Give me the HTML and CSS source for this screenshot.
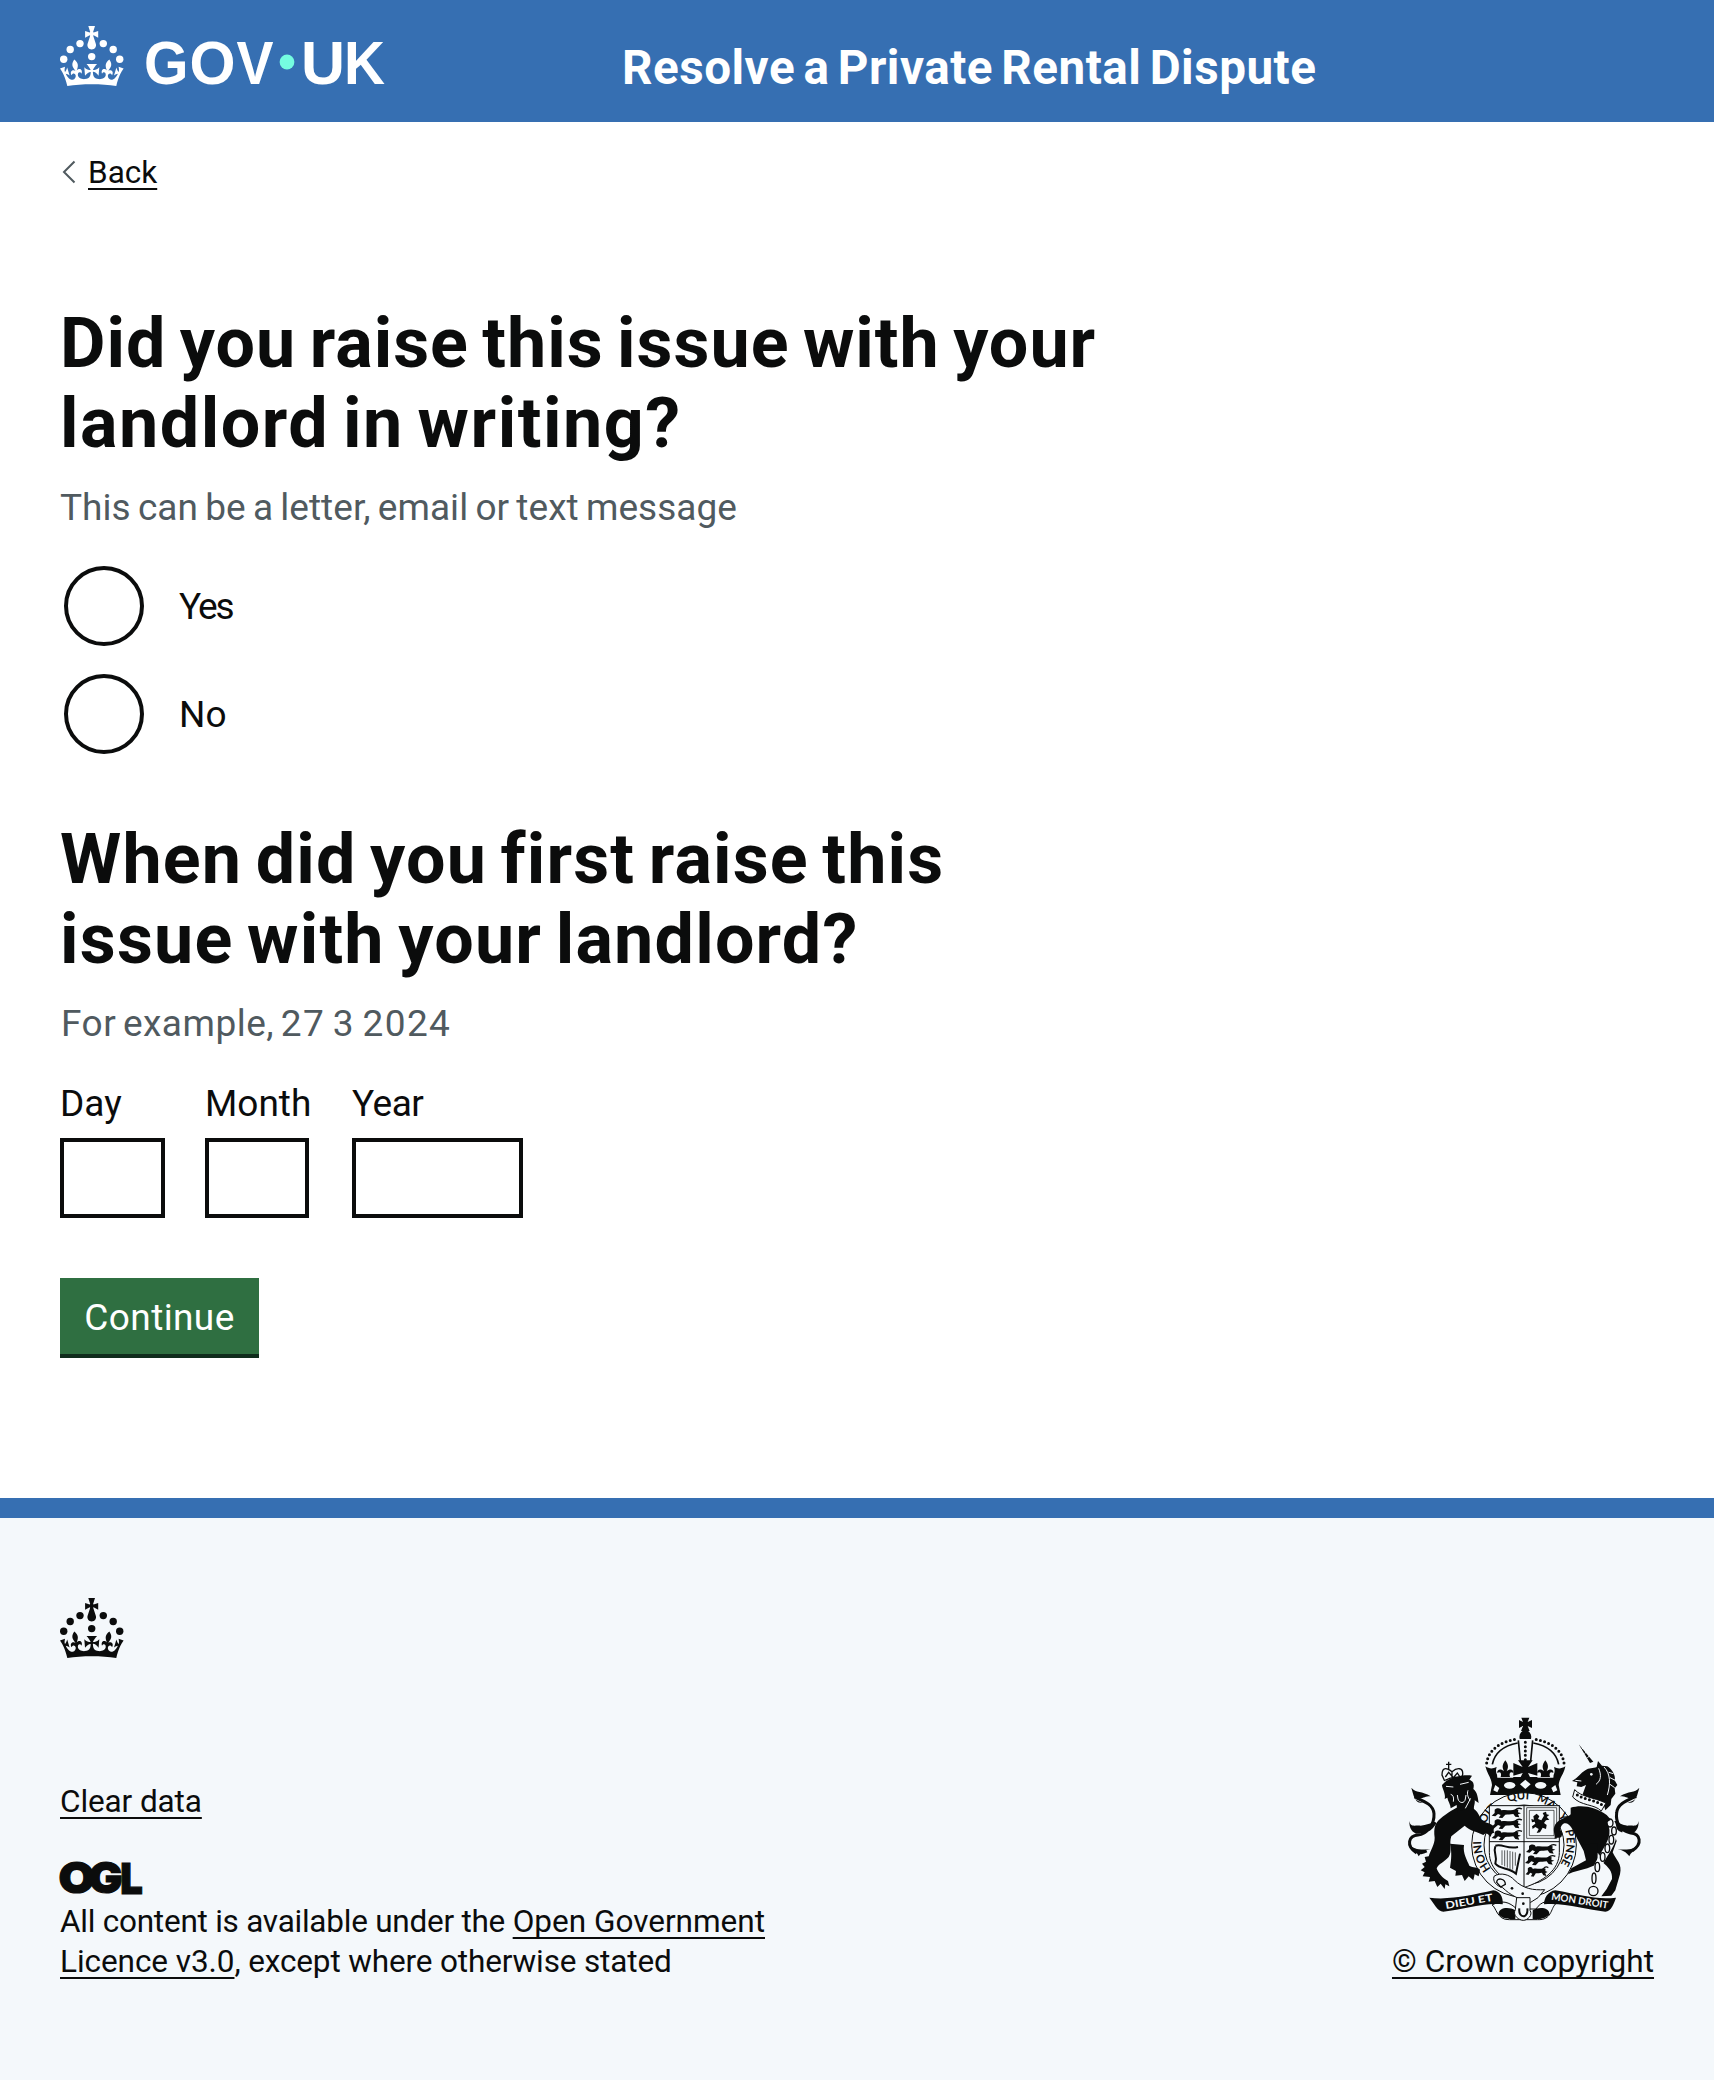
FILE: index.html
```html
<!DOCTYPE html>
<html lang="en">
<head>
<meta charset="utf-8">
<title>Resolve a Private Rental Dispute</title>
<link rel="stylesheet" href="styles.css">
</head>
<body>
<svg class="defs" width="0" height="0" aria-hidden="true">
  <symbol id="crown" viewBox="0 0 64 60">
    <circle cx="20" cy="17.6" r="3.7"/><circle cx="10.2" cy="23.5" r="3.7"/><circle cx="3.7" cy="33.2" r="3.7"/><circle cx="31.7" cy="30.6" r="3.7"/><circle cx="43.3" cy="17.6" r="3.7"/><circle cx="53.2" cy="23.5" r="3.7"/><circle cx="59.7" cy="33.2" r="3.7"/>
    <path d="M33.1,9.8c.2-.1.3-.3.5-.5l4.6,2.4v-6.8l-4.6,1.5c-.1-.2-.3-.3-.5-.5l1.9-5.9h-6.7l1.9,5.9c-.2.1-.3.3-.5.5l-4.6-1.5v6.8l4.6-2.4c.1.2.3.3.5.5l-2.6,8c-.9,2.8,1.2,5.7,4.1,5.7h0c3,0,5.1-2.9,4.1-5.7l-2.6-8ZM37,37.9s-3.4,3.8-4.1,6.1c2.2,0,4.2-.5,6.4-2.8l-.7,8.5c-2-2.8-4.4-4.1-5.7-3.8.1,3.1.5,6.7,5.8,7.2,3.7.3,6.7-1.5,7-3.8.4-2.6-2-4.3-3.7-1.6-1.4-4.5,2.4-6.1,4.9-3.2-1.9-4.5-1.8-7.7,2.4-10.9,3,4,2.6,7.3-1.2,11.1,2.4-1.3,6.2,0,4,4.6-1.2-2.8-3.7-2.2-4.2.2-.3,1.7.7,3.7,3,4.2,1.9.3,4.7-.9,7-5.9-1.3,0-2.4.7-3.9,1.7l2.4-8c.6,2.3,1.4,3.7,2.2,4.5.6-1.6.5-2.8,0-5.3l5,1.8c-2.6,3.6-5.2,8.7-7.3,17.5-7.4-1.1-15.7-1.7-24.5-1.7h0c-8.8,0-17.1.6-24.5,1.7-2.1-8.9-4.7-13.9-7.3-17.5l5-1.8c-.5,2.5-.6,3.7,0,5.3.8-.8,1.6-2.3,2.2-4.5l2.4,8c-1.5-1-2.6-1.7-3.9-1.7,2.3,5,5.2,6.2,7,5.9,2.3-.4,3.3-2.4,3-4.2-.5-2.4-3-3.1-4.2-.2-2.2-4.6,1.6-6,4-4.6-3.7-3.7-4.2-7.1-1.2-11.1,4.2,3.2,4.3,6.4,2.4,10.9,2.5-2.8,6.3-1.3,4.9,3.2-1.8-2.7-4.1-1-3.7,1.6.3,2.3,3.3,4.1,7,3.8,5.4-.5,5.7-4.2,5.8-7.2-1.3-.2-3.7,1-5.7,3.8l-.7-8.5c2.2,2.3,4.2,2.7,6.4,2.8-.7-2.3-4.1-6.1-4.1-6.1h10.6Z"/>
  </symbol>
</svg>

<header class="header">
  <svg class="logo" width="330" height="60" viewBox="0 0 330 60" role="img" aria-label="GOV.UK">
    <use href="#crown" width="64" height="60"/>
    <g class="logo-text">
      <text x="84" y="58.3" textLength="44.500" lengthAdjust="spacingAndGlyphs">G</text>
      <text x="129.5" y="58.3" textLength="46" lengthAdjust="spacingAndGlyphs">O</text>
      <text x="176.5" y="58.3" textLength="37" lengthAdjust="spacingAndGlyphs">V</text>
      <text x="241" y="58.3" textLength="44" lengthAdjust="spacingAndGlyphs">U</text>
      <text x="284" y="58.3" textLength="41" lengthAdjust="spacingAndGlyphs">K</text>
    </g>
    <circle class="logo-dot" cx="227" cy="36" r="7.4"/>
  </svg>
  <span class="service">Resolve a Private Rental Dispute</span>
</header>

<main class="main">
  <a class="back" href="#"><svg width="14" height="24" viewBox="0 0 14 24"><path d="M12.5 .5 2 11l10.500 10.500"/></svg><span class="link">Back</span></a>

  <section class="question">
    <h1 class="heading"><span class="line line-a">Did you raise this issue with your</span><span class="line line-b">landlord in writing?</span></h1>
    <p class="hint hint-a">This can be a letter, email or text message</p>
    <div class="radios">
      <div class="radio"><span class="radio-ring"></span><span class="yes">Yes</span></div>
      <div class="radio"><span class="radio-ring"></span><span>No</span></div>
    </div>
  </section>

  <section class="question question-date">
    <h2 class="heading"><span class="line line-c">When did you first raise this</span><span class="line line-d">issue with your landlord?</span></h2>
    <p class="hint hint-b">For example, <span class="digits">27 3 2024</span></p>
    <div class="date">
      <label class="field">Day<input class="input input-day"></label>
      <label class="field">Month<input class="input input-month"></label>
      <label class="field field-year">Year<input class="input input-year"></label>
    </div>
  </section>
  <button class="button">Continue</button>
</main>

<footer class="footer">
  <svg class="footer-crown" width="64" height="60"><use href="#crown" width="64" height="60"/></svg>
  <div class="footer-row">
    <div class="meta">
      <a class="link clear" href="#">Clear data</a>
      <svg class="ogl" width="83" height="35" viewBox="0 0 83 35" role="img" aria-label="Open Government Licence">
        <g class="ogl-text">
          <text x="-1.500" y="32.4" textLength="36.500" lengthAdjust="spacingAndGlyphs">O</text>
          <text x="28.500" y="32.4" textLength="34" lengthAdjust="spacingAndGlyphs">G</text>
          <text x="60.300" y="32.8" textLength="22.500" lengthAdjust="spacingAndGlyphs">L</text>
        </g>
      </svg>
      <p class="licence"><span class="line licence-a">All content is available under the <a class="link open" href="#">Open Government</a></span><span class="line"><a class="link version" href="#">Licence v3.0</a><span class="rest">, except where otherwise stated</span></span></p>
    </div>
    <div class="copyright">
      <svg class="crest" width="232" height="204" viewBox="84 50 696 612" aria-hidden="true">
        <defs>
          <g id="lion-passant">
            <path d="M2 4c8-7 18-5 20 2 14-4 28 3 42-3l9 2-1 7 9 3-9 3 4 9-12-2-6-8c-9 2-17 1-24 2l-9 10-11-1 6-8-8-3-8 7-11-2 9-8z"/>
            <path class="s" d="M64 5c7-7 16-5 20-3"/>
          </g>
          <g id="fleur">
            <path d="M0-32c11 14 9 23 4 33 10-10 22-5 20 5-8-6-14 1-10 12H-14c4-11-2-18-10-12-2-10 10-15 20-5-5-10-7-19 4-33z"/>
          </g>
          <path id="ring" d="M359 530A128 128 0 1 1 505 530"/>
        </defs>

        <!-- imperial crown -->
        <path d="M424 52h24l-5 13 13-6v24l-13-6 6 15h-26l6-15-12 6V59l12 6z"/>
        <path d="M436 88c14 4 20 14 17 28h-34c-3-14 3-24 17-28z"/>
        <path class="s w5" d="M337 192c6-30 30-55 76-64M536 192c-6-30-30-55-76-64"/>
        <path class="dots" d="M320 188c6-38 36-63 92-72M552 188c-6-38-36-63-92-72"/>
        <path class="s w5" d="M415 120l6 62M458 120l-6 62"/>
        <path class="dots" d="M436 126v54"/>
        <path d="M316 198c12 8 22 8 34 2-4 12-2 20 6 30h160c8-10 10-18 6-30 12 6 22 6 34-2-4 24-18 34-20 56l6 30H330l6-30c-2-22-14-32-20-56z"/>
        <path class="bg" d="M352 232c-4-22 14-30 24-30s20 8 24 30zM472 232c4-22 14-30 24-30s28 8 24 30z"/>
        <use href="#fleur" x="376" y="212"/><use href="#fleur" x="496" y="212"/>
        <path d="M414 180h44l-14 20 28-12v38l-28-8 10 20h-36l10-20-28 8v-38l28 12z"/>
        <g class="bg"><path d="M436 238l16 14-16 14-16-14zM346 254l12 9-6 13-12-6zM526 254l-12 9 6 13 12-6z"/><ellipse cx="389" cy="255" rx="17" ry="10"/><ellipse cx="482" cy="255" rx="17" ry="10"/></g>

        <!-- garter -->
        <circle class="bgs" cx="432" cy="434" r="157"/>
        <circle class="s w3" cx="432" cy="434" r="120"/>
        <g class="garter-text"><text><textPath href="#ring" startOffset="36">HONI</textPath></text><text><textPath href="#ring" startOffset="160">SOIT</textPath></text><text><textPath href="#ring" startOffset="276">QUI</textPath></text><text><textPath href="#ring" startOffset="362">MAL Y</textPath></text><text><textPath href="#ring" startOffset="490">PENSE</textPath></text></g>

        <!-- shield -->
        <path class="bgs3" d="M328 316h210v140c0 54-48 86-106 106-58-20-104-52-104-106z"/>
        <path class="s w3" d="M432 316v246M328 424h210"/>
        <use href="#lion-passant" x="342" y="324"/><use href="#lion-passant" x="342" y="357"/><use href="#lion-passant" x="342" y="391"/>
        <use href="#lion-passant" x="445" y="433"/><use href="#lion-passant" x="442" y="466"/><use href="#lion-passant" transform="translate(442 500) scale(.75 1)"/>
        <path class="s w2" d="M440 322h90v92h-90zM448 330h74v76h-74z"/>
        <path d="M460 348l10-8 8 8-4 8 10 4 8-14-4-8 10-4 2 8 8 2-8 6 8 8-10 2-6 8 8 6-2 12-10-4-8 14-10 2 6-12-10-6-8 6-2-8 10-8-2-6-8 2-2-10 8 2z"/>
        <path class="s w6" d="M346 438c-8 20 8 28 0 52 14 18 40 10 62 30l12-60M346 436c24-6 36 12 68 4"/>
        <path class="s w2" d="M366 450v44M374 450v48M382 450v52M390 452v54M398 454v54M406 456v40"/>

        <!-- lion supporter -->
        <path class="s w8" d="M110 458c-34-22-24-52 4-54 26-2 50-32 48-64-2-28-32-38-58-50M122 398c22-4 32-14 44-32M106 450c14 10 22 8 34 2"/>
        <path d="M94 262c14 18 32 8 58 26-22 0-20 10-50 4 6 8 18 14 28 14-24 8-30-22-36-44zM88 362c4 20 14 12 34 14 16-2 30-8 46-10-16 22-38 34-60 34-16-8-20-20-20-38zM86 430c14 18 38 20 66 16-16 4-26 8-36 22-4-14-14-12-30-38z"/>
        <path d="M246 322c28-10 48 8 56 34 14 14 30 10 44 26-8 2-4 10-4 16-8-2-8 6-10 12-8-12-16-14-22-6-18-10-40-12-56-28l-40 32c-8 22 4 44-8 62-14 16-30 20-36 34 4 14 18 30 34 38l4 16-12-6-2 14-12-16-10 10-8-18-18 2 4-14-22-2 6-12-12-6 12-10-8-10 12-6-4-14 12-2c6-20 18-34 18-56-4-30 2-44 16-56 24-20 44-32 66-42z"/>
        <path d="M210 430l42 4c-4 26 10 46 16 62 12 8 24 2 32 12l-4 20-12-6-4 18-14-12-12 14-8-18-20 2 2-14-18-10c4-24 6-46 0-72z"/>
        <path d="M192 248c16-18 58-26 84-22l-8 12c16 6 14 18 12 28 12 8 14 28 16 42l-12-8c2 10-4 18-2 28l-22-6-28 16-2-24-18 10c0-12-8-20-10-32l-8 4c4-16-8-32-8-42z"/>
        <path class="ws" d="M198 258l22 2M240 252l26-6M212 282c8 2 10 10 8 22M264 270c-4 12 0 20 6 30M232 284l2 12c4 14 20 14 22 0l2-12M256 324l16-30"/>
        <path class="s w4" d="M194 242l-8-18c0-28 18-20 30-10 14-12 34-14 32 8l-4 16M196 240c16-10 34-12 52-4M216 212v20M206 184v26M198 192h16M196 230l10-14 14 16 12-14 8 12"/>

        <!-- unicorn supporter -->
        <path d="M596 132l44 52-10 4zM576 242c16-8 24-22 40-32 10-8 24-6 34-10l4-18 12 14 16 2c14 8 26 28 22 42l8 14-8 10 2 16-12 16-2 18-16 16c-4-16-6-26-24-30-14-6-32-4-44-18l10-28-14 6-14-2 2-12z"/>
        <circle class="bg" cx="634" cy="222" r="4"/>
        <path class="ws" d="M672 200c20 20 20 52 10 84M686 216l14 4M690 232l16 8M690 252l14 10M656 204c8 20 8 36-8 48M586 240l18 2M604 148l6-6M614 160l6-6M622 172l8-6"/>
        <path class="bgs3" d="M584 268c20 22 54 22 94 40l-14 24c-22-22-60-14-86-42z"/>
        <path class="dots" d="M592 284c22 14 52 14 74 30"/>
        <path d="M572 322c30-10 76-4 108 22 28 26 18 50 30 78l-12 34c10 24 30 34 22 66l-14 48-12 16-30 2 16-22 16-30c2-22-10-34-28-50l-14-28-44-8-18-34c-16-32-24-52-42-46-10 8-12 20-2 28l-4 12c-8 4-14 0-20 6 2-16-8-26 2-44 14-18 36-20 46-30z"/>
        <path d="M606 432l48-2-2 62-30 12-44 12-14 6 10-18 44-24z"/>
        <path class="s w8" d="M756 452c34-22 24-52-4-54-30-6-46-32-42-60 2-28 32-38 58-50M728 392c-12-4-22-14-24-30"/>
        <path d="M778 262c-14 18-32 8-58 26 22 0 20 10 50 4-6 8-18 14-28 14 24 8 30-22 36-44zM776 362c-4 20-14 12-34 14-16-2-22-8-32-10 6 22 28 34 46 34 16-8 20-20 20-38zM778 430c-14 18-38 20-66 16 16 4 26 8 36 22 4-14 14-12 30-38z"/>
        <path class="chain-gap" d="M690 360c24 40-2 78-22 110-14 24-26 46-28 84"/>
        <g class="chain"><ellipse cx="690" cy="368" rx="9" ry="12"/><ellipse cx="702" cy="392" rx="7" ry="12"/><ellipse cx="694" cy="418" rx="7" ry="13"/><ellipse cx="682" cy="444" rx="7" ry="13"/><ellipse cx="668" cy="470" rx="7" ry="13"/><ellipse cx="652" cy="500" rx="7" ry="14"/><ellipse cx="642" cy="534" rx="6" ry="16"/><circle cx="640" cy="572" r="14"/></g>

        <!-- motto scroll -->
        <path class="bgs3" d="M336 614c12 4 14 46 52 44h84c44 2 40-34 54-46-20-14-42-10-58 14h-58c-22-22-46-28-74-12z"/>
        <path d="M148 592c60 8 130-8 192-22 22 2 30 24 28 42-60-6-118 16-178 22-18 0-28-26-42-42zM708 592c-60 8-110-10-182-22-22 2-34 24-34 42 60-6 128 16 184 22 18 0 26-26 32-42z"/>
        <path d="M356 642c-2-20 30-24 50-12v26c-18 2-40 0-50-14zM508 642c2-20-30-24-50-12v26c18 2 40 0 50-14z"/>
        <path class="bgs3" d="M342 528c20-14 48-4 60 10 28 28 58 32 92 30l-20 24-22 14c-34-8-62-22-84-44-20-6-30-18-26-34z"/>
        <path class="s w4" d="M350 546c0-16 26-12 26 6l-14 8z"/>
        <path class="bgs3" d="M410 592h40v38c10 14-8 30-20 30s-34-14-24-32z"/><path class="s w6" d="M418 624c-4 32 28 32 24 0"/>
        <circle cx="396" cy="564" r="4"/><circle cx="428" cy="580" r="4"/><circle cx="430" cy="610" r="4"/>
        <g class="motto"><text transform="translate(198 626) rotate(-10)" textLength="144" lengthAdjust="spacingAndGlyphs">DIEU ET</text><text transform="translate(513 598) rotate(9)" textLength="172" lengthAdjust="spacingAndGlyphs">MON DROIT</text></g>
      </svg>
      <a class="link crown-link" href="#">© Crown copyright</a>
    </div>
  </div>
</footer>
</body>
</html>
```
FILE: styles.css
```css
* { box-sizing: border-box; }
body {
  margin: 0;
  background: #fff;
  color: #0b0c0c;
  font: 400 37px/50px Roboto, "Liberation Sans", sans-serif;
}
h1, h2, p { margin: 0; }
a { color: inherit; text-decoration: none; }
svg { display: block; flex: none; fill: currentColor; overflow: visible; }
.defs { position: absolute; }
.line { display: block; white-space: nowrap; }

.header {
  display: flex;
  align-items: flex-start;
  height: 122px;
  padding: 26px 60px 0;
  background: #366fb2;
  color: #fff;
}
.logo-text { font: 700 61px "Liberation Sans", sans-serif; }
.logo-dot { fill: #75fce0; }
.service {
  margin: 17px 0 0 232px;
  font-size: 47.6px;
  font-weight: 700;
  letter-spacing: .5px;
  word-spacing: -4px;
  white-space: nowrap;
}

.main { padding: 31px 60px 140px; }
.back, .footer { font-size: 31.5px; line-height: 40px; }
.back { display: flex; align-items: center; gap: 12px; width: 120px; padding-left: 2px; }
.back svg { fill: none; stroke: #505a5f; stroke-width: 2; }
.link {
  text-decoration: underline 2px;
  text-underline-offset: 5px;
  text-decoration-skip-ink: none;
}
.question { margin-top: 110px; }
.question-date { margin-top: 61px; }
.heading { font-size: 70px; line-height: 80px; font-weight: 700; word-spacing: -5px; }
.line-a { letter-spacing: 1px; }
.line-b { letter-spacing: 1.5px; }
.line-c { letter-spacing: 1.16px; }
.line-d { letter-spacing: 1.2px; }
.hint { margin-top: 20px; color: #505a5f; }
.hint-a { letter-spacing: .04px; word-spacing: -2px; }
.hint-b { padding-left: 1px; letter-spacing: .5px; word-spacing: -3px; }
.digits { letter-spacing: 1.4px; }

.radios { display: flex; flex-direction: column; gap: 20px; margin-top: 29px; }
.radio { display: flex; align-items: center; gap: 35px; height: 88px; padding-left: 4px; }
.radio > :last-child { padding-top: 1px; }
.radio-ring { width: 80px; height: 80px; border: 4px solid #0b0c0c; border-radius: 50%; }
.yes { letter-spacing: -2.1px; }

.date { display: grid; grid-template-columns: 145px 147px 171px; margin-top: 30px; }
.field { display: flex; flex-direction: column; gap: 9px; }
.field-year { letter-spacing: -.5px; }
.input { height: 80px; border: 4px solid #0b0c0c; border-radius: 0; background: #fff; }
.input-day { width: 105px; }
.input-month { width: 104px; }
.input-year { width: 171px; }
.button {
  display: block;
  width: 199px;
  height: 76px;
  margin: 60px 0 4px;
  padding: 15px 0 11px;
  border: 0;
  background: #2f6f41;
  box-shadow: 0 4px 0 #0f2c1c;
  color: #fff;
  font: inherit;
  letter-spacing: .4px;
}

.footer {
  height: 582px;
  padding: 80px 60px 0;
  border-top: 20px solid #366fb2;
  background: #f4f8fb;
}
.footer-row { display: flex; justify-content: space-between; margin-top: 59px; }
.meta { padding-top: 65px; }
.clear { display: block; letter-spacing: -.1px; }
.ogl { margin: 39px 0 6px; }
.ogl-text { font: 900 43px Inter, sans-serif; stroke: currentColor; stroke-width: 1.2; }
.licence-a { letter-spacing: -.24px; }
.open { letter-spacing: 0; }
.version { letter-spacing: -.06px; }
.rest { letter-spacing: -.14px; }
.copyright { display: flex; flex-direction: column; align-items: center; width: 262px; gap: 21px; }
.crown-link { letter-spacing: .07px; white-space: nowrap; }

.crest { margin-left: 2px; }
.crest .s { fill: none; stroke: currentColor; stroke-width: 4; }
.crest .w2 { stroke-width: 2; }
.crest .w3 { stroke-width: 3; }
.crest .w5 { stroke-width: 5; }
.crest .w6 { stroke-width: 6; }
.crest .w8 { stroke-width: 9; }
.crest .dots { fill: none; stroke: currentColor; stroke-width: 9; stroke-linecap: round; stroke-dasharray: 0 13; }
.crest .bg { fill: #f4f8fb; }
.crest .bgs, .crest .bgs3 { fill: #f4f8fb; stroke: currentColor; stroke-width: 3; }
.crest .ws { fill: none; stroke: #f4f8fb; stroke-width: 3; }
.chain-gap { fill: none; stroke: #f4f8fb; stroke-width: 22; }
.chain { fill: none; stroke: currentColor; stroke-width: 4; }
.garter-text { font: 700 34px Lato, sans-serif; }
.motto { font: 700 30px Lato, sans-serif; fill: #f4f8fb; }
```
